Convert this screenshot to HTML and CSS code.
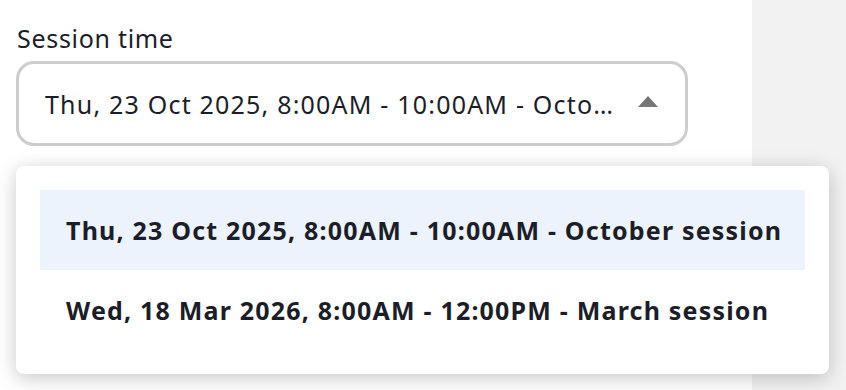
FILE: index.html
```html
<!DOCTYPE html>
<html lang="en">
<head>
    <meta charset="UTF-8">
    <meta name="viewport" content="width=device-width, initial-scale=1.0">
    <title>Session time</title>
    <link rel="stylesheet" href="styles.css">
</head>
<body>
    <div class="page">
        <div class="main">
            <div class="field">
                <label class="field-label" for="session">Session time</label>
                <div class="select" id="session">
                    <span class="select-value">Thu, 23 Oct 2025, 8:00AM - 10:00AM - October session</span>
                    <svg class="select-arrow" width="20" height="11" viewBox="0 0 20 11">
                        <path d="M10 0 L20 11 L0 11 Z" fill="#777"/>
                    </svg>
                </div>

                <ul class="menu">
                    <li class="menu-item active">Thu, 23 Oct 2025, 8:00AM - 10:00AM - October session</li>
                    <li class="menu-item">Wed, 18 Mar 2026, 8:00AM - 12:00PM - March session</li>
                </ul>
            </div>
        </div>
        <div class="side"></div>
    </div>
</body>
</html>
```

FILE: styles.css
```css
body {
    margin: 0;
    font-family: "Noto Sans", Arial, sans-serif;
    color: #1b1e28;
    background: #f2f2f2;
}

.page {
    display: flex;
    height: 390px;
    overflow: hidden;
}

.main {
    width: 752px;
    background-color: #fff;
    padding: 22px 16px 0;
    box-sizing: border-box;
}

.side {
    flex: 1;
    background-color: #f2f2f2;
}

.field {
    position: relative;
}

.field-label {
    display: block;
    font-size: 25px;
    line-height: 32px;
    letter-spacing: 0.7px;
    margin-left: 1px;
    margin-bottom: 7px;
}

.select {
    display: flex;
    align-items: center;
    width: 672px;
    height: 85px;
    box-sizing: border-box;
    border: 3px solid #cdcdcd;
    border-radius: 18px;
    padding: 0 27px 0 26px;
    background-color: #fff;
}

.select-value {
    flex: 1;
    font-size: 25px;
    letter-spacing: 1.2px;
    white-space: nowrap;
    overflow: hidden;
    text-overflow: ellipsis;
    margin-right: 18px;
}

.select-arrow {
    flex: none;
    margin-bottom: 4px;
}

.menu {
    position: absolute;
    top: 144px;
    left: 0;
    width: 813px;
    margin: 0;
    padding: 24px;
    box-sizing: border-box;
    list-style: none;
    background-color: #fff;
    border-radius: 8px;
    box-shadow: 0 4px 20px rgba(0, 0, 0, 0.22);
}

.menu-item {
    height: 80px;
    display: flex;
    align-items: center;
    padding-left: 26px;
    font-size: 25px;
    font-weight: 700;
    letter-spacing: 1.2px;
    white-space: nowrap;
}

.menu-item.active {
    background-color: #ecf3fc;
}
```
